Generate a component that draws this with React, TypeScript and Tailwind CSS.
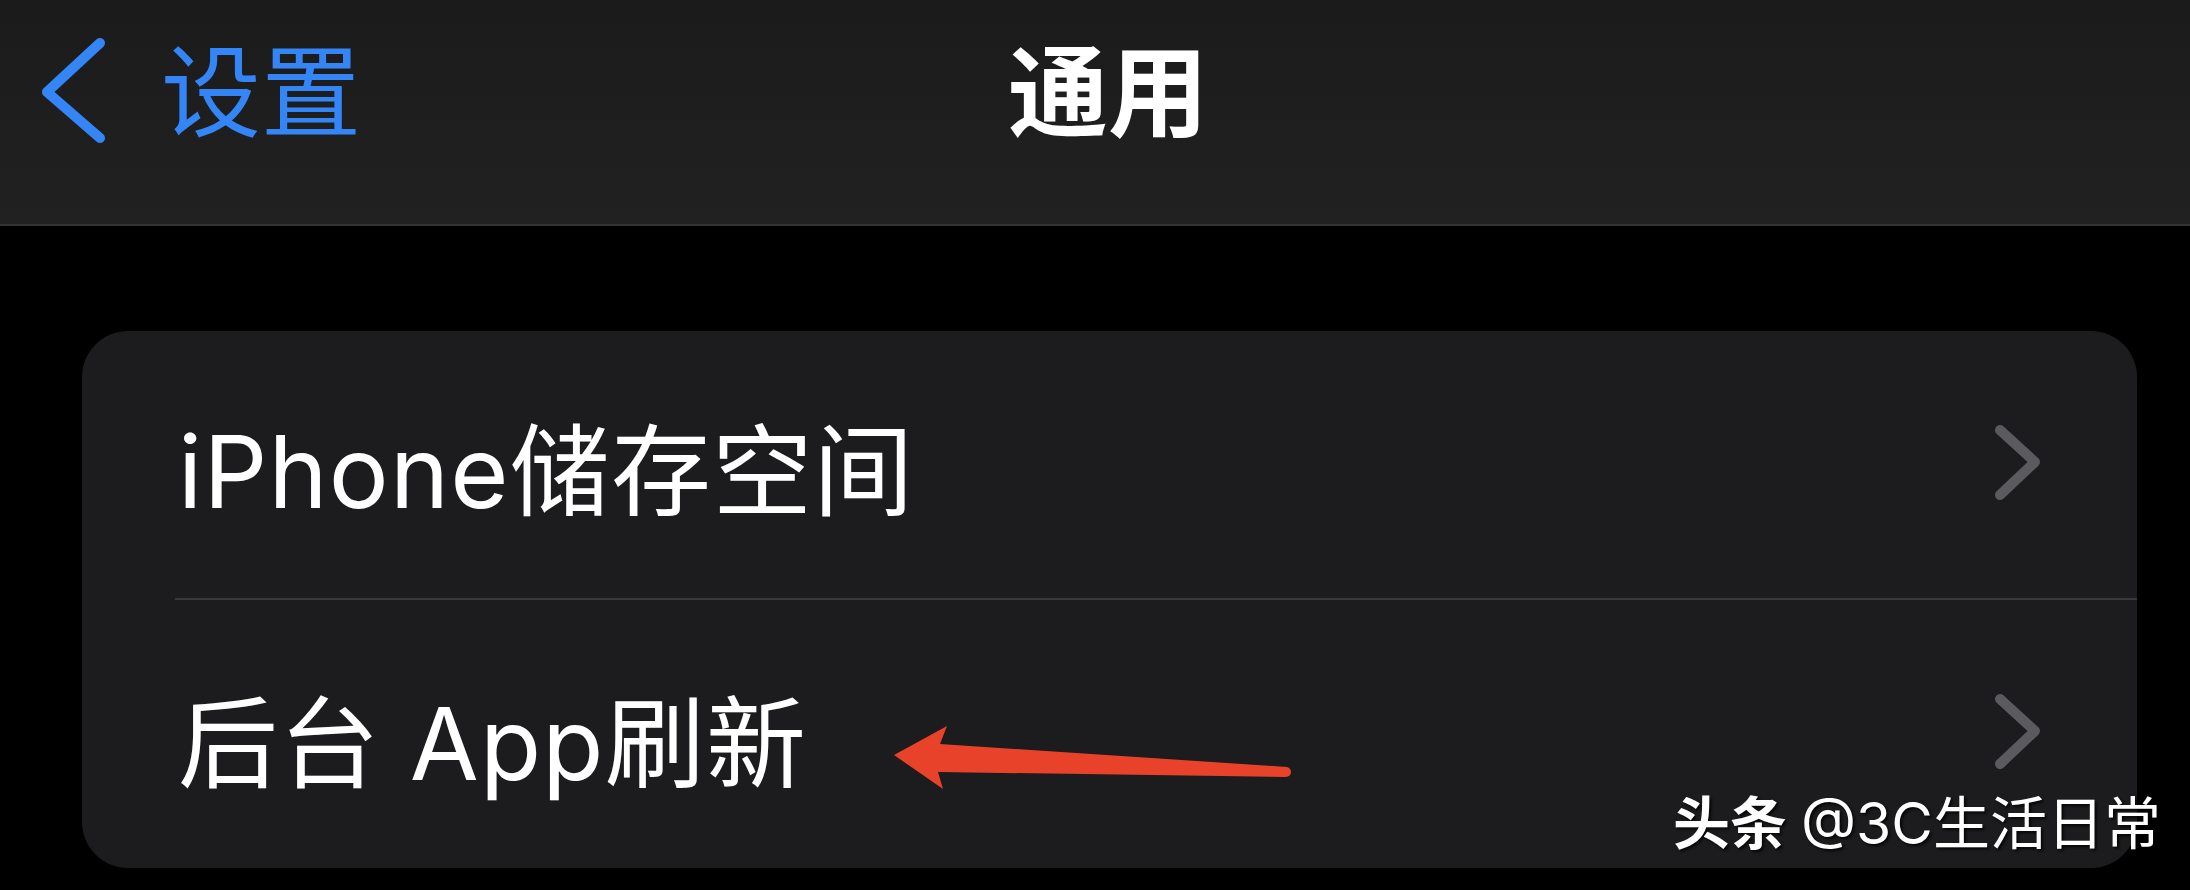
import { ReactNode } from "react";

const FONT = `"Inter", "Noto Sans CJK SC", sans-serif`;

const BackChevron = () => (
  <svg width="80" height="130" viewBox="0 0 80 130" className="shrink-0">
    <path
      d="M70 15 L17 64 L70 110"
      fill="none"
      stroke="#3485f6"
      strokeWidth="10"
      strokeLinecap="round"
      strokeLinejoin="round"
    />
  </svg>
);

const RowChevron = () => (
  <svg width="50" height="80" viewBox="0 0 50 80" className="shrink-0">
    <path
      d="M7 5 L42 37 L7 70"
      fill="none"
      stroke="#5b5b5f"
      strokeWidth="10"
      strokeLinecap="round"
      strokeLinejoin="round"
    />
  </svg>
);

const SettingsRow = function ({
  children,
  shift,
}: {
  children: ReactNode;
  shift: string;
}) {
  return (
    <div className="flex h-full flex-1 items-center justify-between pr-[94px]">
      <span
        className={`text-[100px] leading-none font-normal tracking-[1.2px] text-white ${shift}`}
      >
        {children}
      </span>
      <RowChevron />
    </div>
  );
};

export default function App() {
  return (
    <div
      className="relative flex h-[890px] w-[2190px] flex-col overflow-hidden bg-black"
      style={{ fontFamily: FONT }}
    >
      {/* nav bar */}
      <div className="relative h-[226px] shrink-0 border-b-2 border-[#333335] bg-gradient-to-b from-[#1b1b1b] to-[#212121]">
        <div className="flex items-start pt-[28px] pl-[30px]">
          <BackChevron />
          <span className="mt-[15px] ml-[51px] text-[100px] leading-none text-[#3485f6]">
            设置
          </span>
        </div>
        <div className="absolute top-[43px] left-0 flex w-full justify-center pl-[26px]">
          <span className="text-[100px] leading-none font-bold text-white">
            通用
          </span>
        </div>
      </div>

      {/* grouped list */}
      <div className="mt-[105px] ml-[82px] flex h-[537px] w-[2055px] flex-col rounded-[46px] bg-[#1c1c1e]">
        <div className="flex h-[267px] pl-[96px]">
          <SettingsRow shift="mt-[14px]">iPhone储存空间</SettingsRow>
        </div>
        <div className="ml-[93px] h-[2px] bg-[#3a3a3c]" />
        <div className="flex h-[268px] pl-[96px]">
          <SettingsRow shift="mt-[20px]">后台 App刷新</SettingsRow>
        </div>
      </div>

      {/* red annotation arrow */}
      <svg
        className="pointer-events-none absolute top-0 left-0"
        width="2190"
        height="890"
        viewBox="0 0 2190 890"
      >
        <polygon
          points="894,755 947,726 940,744 1287,767 1285,777 938,772 943,789"
          fill="#e8432a"
        />
        <circle cx="1286" cy="772" r="5" fill="#e8432a" />
      </svg>

      {/* watermark */}
      <div className="absolute top-[795px] left-[1673px] flex items-baseline text-[57px] leading-none text-white [text-shadow:2px_2px_3px_rgba(0,0,0,0.8)]">
        <span className="font-bold">头条</span>
        <span className="ml-[14px]">@3C生活日常</span>
      </div>
    </div>
  );
}
